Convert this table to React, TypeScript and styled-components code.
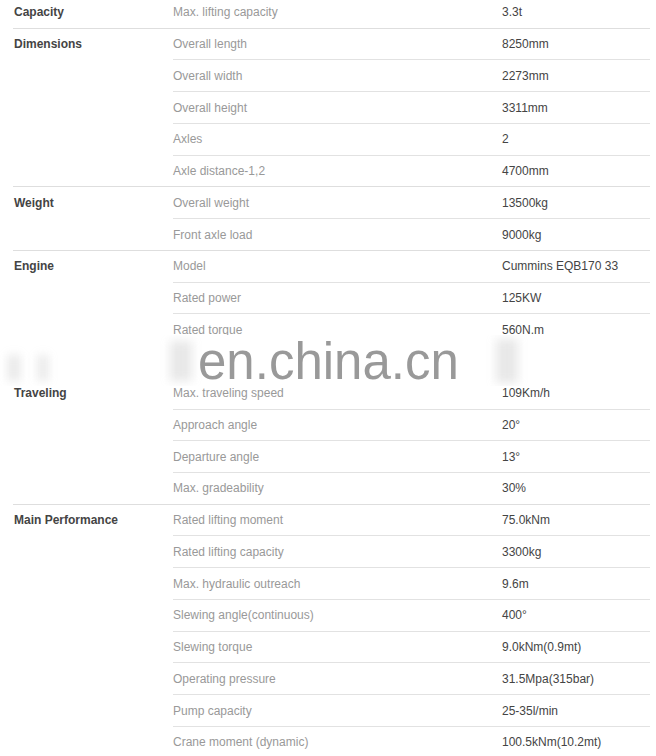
import styled, { createGlobalStyle } from 'styled-components'

const GlobalStyle = createGlobalStyle`
  body {
    margin: 0;
    background: #fff;
    font-family: "Liberation Sans", Arial, sans-serif;
  }
`

const Page = styled.div`
  position: relative;
  width: 656px;
  height: 756px;
  overflow: hidden;
`

const Table = styled.div`
  width: 637px;
  margin: -3px 0 0 13px;
`

const Section = styled.div`
  display: grid;
  grid-template-columns: 160px 1fr;
  border-top: 1px solid #dedede;
  &:first-child {
    border-top: none;
  }
`

const Label = styled.div`
  padding-left: 1px;
  height: 30.74px;
  display: flex;
  align-items: center;
  font-size: 12px;
  font-weight: 700;
  color: #444;
`

const Rows = styled.div`
  display: flex;
  flex-direction: column;
`

const Row = styled.div<{ $first?: boolean }>`
  box-sizing: border-box;
  display: grid;
  grid-template-columns: 329px 148px;
  align-items: center;
  height: ${p => (p.$first ? '30.74px' : '31.74px')};
  border-top: ${p => (p.$first ? 'none' : '1px solid #e2e2e2')};
  font-size: 12px;
`

const Name = styled.div`
  color: #999;
`

const Value = styled.div`
  color: #444;
`

/* blurred band with the site watermark, laid over the table */
const Watermark = styled.div`
  position: absolute;
  left: 0;
  top: 335px;
  width: 656px;
  height: 51px;
  background: #fff;
  overflow: hidden;
`

const Mark = styled.div`
  position: absolute;
  left: 198px;
  top: 1px;
  font-size: 51px;
  color: #999;
  line-height: 1;
  white-space: nowrap;
`

const Smudge = styled.div<{ $x: number; $y: number; $w: number; $h: number }>`
  position: absolute;
  left: ${p => p.$x}px;
  top: ${p => p.$y}px;
  width: ${p => p.$w}px;
  height: ${p => p.$h}px;
  background: rgba(150, 150, 150, 0.22);
  filter: blur(5px);
`

type Spec = { group: string; items: [string, string][] }

const specs: Spec[] = [
  { group: 'Capacity', items: [['Max. lifting capacity', '3.3t']] },
  {
    group: 'Dimensions',
    items: [
      ['Overall length', '8250mm'],
      ['Overall width', '2273mm'],
      ['Overall height', '3311mm'],
      ['Axles', '2'],
      ['Axle distance-1,2', '4700mm'],
    ],
  },
  {
    group: 'Weight',
    items: [
      ['Overall weight', '13500kg'],
      ['Front axle load', '9000kg'],
    ],
  },
  {
    group: 'Engine',
    items: [
      ['Model', 'Cummins EQB170 33'],
      ['Rated power', '125KW'],
      ['Rated torque', '560N.m'],
      ['', ''],
    ],
  },
  {
    group: 'Traveling',
    items: [
      ['Max. traveling speed', '109Km/h'],
      ['Approach angle', '20°'],
      ['Departure angle', '13°'],
      ['Max. gradeability', '30%'],
    ],
  },
  {
    group: 'Main Performance',
    items: [
      ['Rated lifting moment', '75.0kNm'],
      ['Rated lifting capacity', '3300kg'],
      ['Max. hydraulic outreach', '9.6m'],
      ['Slewing angle(continuous)', '400°'],
      ['Slewing torque', '9.0kNm(0.9mt)'],
      ['Operating pressure', '31.5Mpa(315bar)'],
      ['Pump capacity', '25-35l/min'],
      ['Crane moment (dynamic)', '100.5kNm(10.2mt)'],
    ],
  },
]

export default function App() {
  return (
    <Page>
      <GlobalStyle />
      <Table>
        {specs.map(s => (
          <Section key={s.group}>
            <Label>{s.group}</Label>
            <Rows>
              {s.items.map(([name, value], i) => (
                <Row key={i} $first={i === 0}>
                  <Name>{name}</Name>
                  <Value>{value}</Value>
                </Row>
              ))}
            </Rows>
          </Section>
        ))}
      </Table>
      <Watermark>
        <Smudge $x={8} $y={20} $w={12} $h={26} />
        <Smudge $x={38} $y={20} $w={10} $h={26} />
        <Smudge $x={170} $y={6} $w={22} $h={40} />
        <Smudge $x={496} $y={4} $w={22} $h={44} />
        <Mark>en.china.cn</Mark>
      </Watermark>
    </Page>
  )
}
